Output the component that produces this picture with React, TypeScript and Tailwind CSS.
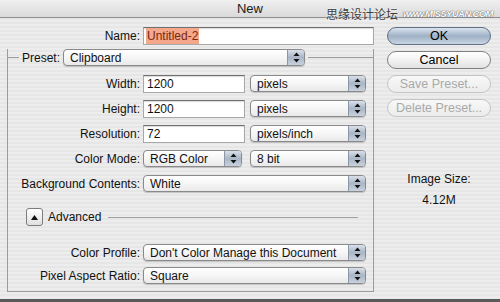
import React from 'react';

const stripes =
  'bg-[image:repeating-linear-gradient(to_bottom,#ededed_0px,#ededed_2px,#e6e6e6_2px,#e6e6e6_4px)]';

const Arrows = () => (
  <svg width="7" height="11" viewBox="0 0 7 11" className="block">
    <path d="M3.5 0.5 L6.5 4 L0.5 4 Z" fill="#111" />
    <path d="M0.5 7 L6.5 7 L3.5 10.5 Z" fill="#111" />
  </svg>
);

const Popup = ({ value, className }: { value: string; className: string }) => (
  <div
    className={`flex h-[17px] overflow-hidden rounded-[4px] border border-[#8a8a8a] bg-gradient-to-b from-white via-[#f6f6f6] to-[#e9e9e9] shadow-[0_1px_1px_rgba(0,0,0,0.18)] ${className}`}
  >
    <div className="flex flex-1 items-center truncate pl-[6px] leading-none">{value}</div>
    <div className="flex w-[17px] items-center justify-center border-l border-[#8c97a6] bg-gradient-to-b from-[#d9e0ea] via-[#aab6c6] to-[#c9d2de]">
      <Arrows />
    </div>
  </div>
);

const Field = ({ value, className }: { value: string; className: string }) => (
  <div
    className={`flex h-[18px] items-center border border-[#a8a8a8] border-t-[#707070] bg-white pl-[3px] leading-none shadow-[inset_0_1px_1px_rgba(0,0,0,0.15)] ${className}`}
  >
    {value}
  </div>
);

const Row = ({ label, top, children }: { label: string; top: string; children: React.ReactNode }) => (
  <div className={`flex h-[17px] items-center ${top}`}>
    <div className="w-[132px] whitespace-nowrap text-right leading-none">{label}</div>
    <div className="ml-[3px] flex items-center">{children}</div>
  </div>
);

const Capsule = ({
  label,
  kind,
  top,
}: {
  label: string;
  kind: 'default' | 'normal' | 'disabled';
  top: string;
}) => {
  const look =
    kind === 'default'
      ? 'border-[#5f6f84] bg-gradient-to-b from-[#dbe4ee] via-[#9fb1c6] to-[#c8d5e3] text-black'
      : kind === 'normal'
        ? 'border-[#808080] bg-gradient-to-b from-white via-[#f2f2f2] to-[#e2e2e2] text-black'
        : 'border-[#c4c4c4] bg-gradient-to-b from-[#f8f8f8] to-[#ececec] text-[#a9a9a9]';
  return (
    <div
      className={`flex h-[18px] w-[104px] items-center justify-center rounded-full border text-[12.5px] leading-none ${look} ${top}`}
    >
      {label}
    </div>
  );
};

export default function App() {
  return (
    <div
      className={`flex h-[302px] w-[500px] flex-col overflow-hidden font-['Liberation_Sans',Arial,sans-serif] text-[12px] text-[#111] ${stripes}`}
    >
      {/* title bar */}
      <div className="relative flex h-[18px] shrink-0 items-center justify-center border-b border-[#8e8e8e] bg-gradient-to-b from-[#f0f0f0] to-[#dadada]">
        <span className="text-[13px] leading-none text-[#1a1a1a]">New</span>
        <div className="absolute left-[326px] top-[8px] flex items-center gap-[5px] whitespace-nowrap">
          <span className="font-['Noto_Sans_CJK_SC',sans-serif] text-[12px] leading-none text-[#3c3c3c] [text-shadow:0_0_2px_#fff]">
            思缘设计论坛
          </span>
          <span className="text-[9.5px] font-bold italic leading-none tracking-[-0.6px] text-white [text-shadow:0_0_1px_#555,0_0_1px_#555]">
            www.MISSYUAN.COM
          </span>
        </div>
      </div>

      <div className="flex flex-1">
        {/* left column */}
        <div className="w-[375px]">
          <div className="mt-[9px] flex h-[17px] items-center">
            <div className="w-[140px] text-right leading-none">Name:</div>
            <div className="ml-[3px] flex h-[18px] w-[231px] items-center border border-[#a8a8a8] border-t-[#707070] bg-white pl-[2px] shadow-[inset_0_1px_1px_rgba(0,0,0,0.15)]">
              <span className="bg-[#f4a78a] px-[1px] py-[2px] leading-none text-[#7a2812]">Untitled-2</span>
            </div>
          </div>

          <div className="ml-[7px] mt-[14px] w-[367px] border-x border-b border-[#9c9c9c] pb-[7px]">
            <div className="-mt-[9px] flex h-[17px] items-center">
              <div className="-ml-px h-px w-[12px] bg-[#9c9c9c]" />
              <div className="ml-[3px] leading-none">Preset:</div>
              <Popup value="Clipboard" className="ml-[3px] w-[242px]" />
              <div className="-mr-px ml-[3px] h-px flex-1 bg-[#9c9c9c]" />
            </div>

            <Row label="Width:" top="mt-[9px]">
              <Field value="1200" className="w-[102px]" />
              <Popup value="pixels" className="ml-[5px] w-[116px]" />
            </Row>
            <Row label="Height:" top="mt-[8px]">
              <Field value="1200" className="w-[102px]" />
              <Popup value="pixels" className="ml-[5px] w-[116px]" />
            </Row>
            <Row label="Resolution:" top="mt-[8px]">
              <Field value="72" className="w-[102px]" />
              <Popup value="pixels/inch" className="ml-[5px] w-[116px]" />
            </Row>
            <Row label="Color Mode:" top="mt-[8px]">
              <Popup value="RGB Color" className="w-[99px]" />
              <Popup value="8 bit" className="ml-[8px] w-[116px]" />
            </Row>
            <Row label="Background Contents:" top="mt-[8px]">
              <Popup value="White" className="w-[223px]" />
            </Row>

            <div className="mt-[16px] flex h-[18px] items-center">
              <div className="ml-[18px] flex h-[18px] w-[17px] items-center justify-center rounded-[3px] border border-[#7d7d7d] bg-gradient-to-b from-white to-[#e0e0e0]">
                <svg width="7" height="5" viewBox="0 0 7 5">
                  <path d="M3.5 0 L7 5 L0 5 Z" fill="#111" />
                </svg>
              </div>
              <div className="ml-[5px] leading-none">Advanced</div>
              <div className="ml-[7px] mr-[15px] h-px flex-1 bg-[#a0a0a0]" />
            </div>

            <Row label="Color Profile:" top="mt-[18px]">
              <Popup value="Don't Color Manage this Document" className="w-[223px]" />
            </Row>
            <Row label="Pixel Aspect Ratio:" top="mt-[6px]">
              <Popup value="Square" className="w-[223px]" />
            </Row>
          </div>
        </div>

        {/* right column */}
        <div className="ml-[12px] flex w-[104px] flex-col">
          <Capsule label="OK" kind="default" top="mt-[9px]" />
          <Capsule label="Cancel" kind="normal" top="mt-[6px]" />
          <Capsule label="Save Preset..." kind="disabled" top="mt-[6px]" />
          <Capsule label="Delete Preset..." kind="disabled" top="mt-[6px]" />
          <div className="mt-[56px] text-center leading-none">Image Size:</div>
          <div className="mt-[9px] text-center leading-none">4.12M</div>
        </div>
      </div>

      <div className="h-[3px] shrink-0 bg-[#5a5a5a]" />
    </div>
  );
}
